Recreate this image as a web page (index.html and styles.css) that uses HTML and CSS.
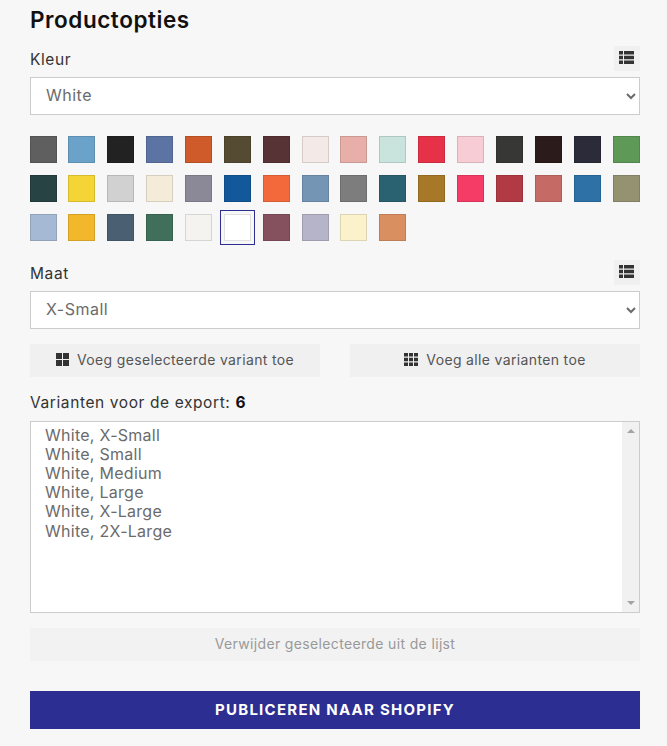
FILE: index.html
```html
<!DOCTYPE html>
<html lang="nl">
<head>
  <meta charset="UTF-8" />
  <meta name="viewport" content="width=device-width, initial-scale=1.0"/>
  <title>Productopties</title>
  <link rel="stylesheet" href="styles.css">
</head>
<body>
  <main class="options">
    <h2 class="options-title">Productopties</h2>

    <div class="field-head field-head-color">
      <label class="field-label">Kleur</label>
      <button class="icon-btn" type="button" aria-label="Lijst">
        <svg width="15" height="13" viewBox="0 0 15 13"><path d="M0 0h4v3.6H0zM5 0h10v3.6H5zM0 4.7h4v3.6H0zM5 4.7h10v3.6H5zM0 9.4h4V13H0zM5 9.4h10V13H5z"/></svg>
      </button>
    </div>
    <select class="field-select">
      <option>White</option>
    </select>

    <div class="swatches">
      <button class="swatch" style="background-color:#5f5f5f"></button>
      <button class="swatch" style="background-color:#6ba2c9"></button>
      <button class="swatch" style="background-color:#222222"></button>
      <button class="swatch" style="background-color:#5c74a3"></button>
      <button class="swatch" style="background-color:#cf5b2a"></button>
      <button class="swatch" style="background-color:#554b33"></button>
      <button class="swatch" style="background-color:#573336"></button>
      <button class="swatch" style="background-color:#f3e9e6"></button>
      <button class="swatch" style="background-color:#e8afa9"></button>
      <button class="swatch" style="background-color:#c9e4dc"></button>
      <button class="swatch" style="background-color:#e63148"></button>
      <button class="swatch" style="background-color:#f7ccd5"></button>
      <button class="swatch" style="background-color:#373735"></button>
      <button class="swatch" style="background-color:#2b1c1b"></button>
      <button class="swatch" style="background-color:#2c2b3a"></button>
      <button class="swatch" style="background-color:#5f9957"></button>

      <button class="swatch" style="background-color:#284343"></button>
      <button class="swatch" style="background-color:#f5d535"></button>
      <button class="swatch" style="background-color:#d1d1d1"></button>
      <button class="swatch" style="background-color:#f4ecd8"></button>
      <button class="swatch" style="background-color:#8b8997"></button>
      <button class="swatch" style="background-color:#12589a"></button>
      <button class="swatch" style="background-color:#f4693c"></button>
      <button class="swatch" style="background-color:#7595b4"></button>
      <button class="swatch" style="background-color:#7d7d7d"></button>
      <button class="swatch" style="background-color:#2a6272"></button>
      <button class="swatch" style="background-color:#a67828"></button>
      <button class="swatch" style="background-color:#f43c66"></button>
      <button class="swatch" style="background-color:#b23a44"></button>
      <button class="swatch" style="background-color:#c66a65"></button>
      <button class="swatch" style="background-color:#2d71a7"></button>
      <button class="swatch" style="background-color:#959272"></button>

      <button class="swatch" style="background-color:#a6b9d4"></button>
      <button class="swatch" style="background-color:#f3b72c"></button>
      <button class="swatch" style="background-color:#4a6072"></button>
      <button class="swatch" style="background-color:#40705c"></button>
      <button class="swatch" style="background-color:#f5f3ef"></button>
      <button class="swatch swatch-active" style="background-color:#ffffff"></button>
      <button class="swatch" style="background-color:#86515f"></button>
      <button class="swatch" style="background-color:#b6b4c9"></button>
      <button class="swatch" style="background-color:#fbf2cb"></button>
      <button class="swatch" style="background-color:#d98f60"></button>
    </div>

    <div class="field-head field-head-size">
      <label class="field-label">Maat</label>
      <button class="icon-btn" type="button" aria-label="Lijst">
        <svg width="15" height="13" viewBox="0 0 15 13"><path d="M0 0h4v3.6H0zM5 0h10v3.6H5zM0 4.7h4v3.6H0zM5 4.7h10v3.6H5zM0 9.4h4V13H0zM5 9.4h10V13H5z"/></svg>
      </button>
    </div>
    <select class="field-select">
      <option>X-Small</option>
    </select>

    <div class="add-row">
      <button class="btn" type="button">
        <svg width="13" height="13" viewBox="0 0 13 13"><path d="M0 0h6v6H0zM7 0h6v6H7zM0 7h6v6H0zM7 7h6v6H7z"/></svg>
        Voeg geselecteerde variant toe
      </button>
      <button class="btn" type="button">
        <svg width="14" height="13" viewBox="0 0 14 13"><path d="M0 0h4v3.6H0zM5 0h4v3.6H5zM10 0h4v3.6h-4zM0 4.7h4v3.6H0zM5 4.7h4v3.6H5zM10 4.7h4v3.6h-4zM0 9.4h4V13H0zM5 9.4h4V13H5zM10 9.4h4V13h-4z"/></svg>
        Voeg alle varianten toe
      </button>
    </div>

    <p class="export-count">Varianten voor de export: <strong>6</strong></p>

    <div class="variant-box">
      <ul class="variant-list">
        <li>White, X-Small</li>
        <li>White, Small</li>
        <li>White, Medium</li>
        <li>White, Large</li>
        <li>White, X-Large</li>
        <li>White, 2X-Large</li>
      </ul>
      <div class="fake-scroll">
        <span class="arrow-up"></span>
        <span class="arrow-down"></span>
      </div>
    </div>

    <button class="btn btn-remove" type="button" disabled>Verwijder geselecteerde uit de lijst</button>

    <button class="btn-publish" type="button">PUBLICEREN NAAR SHOPIFY</button>
  </main>
</body>
</html>
```

FILE: styles.css
```css
* {
  margin: 0; padding: 0; box-sizing: border-box;
  font-family: 'Inter', 'Open Sans', sans-serif;
}
body {
  background: #f7f7f7;
  color: #333;
}
.options {
  width: 610px;
  margin-left: 30px;
}
.options-title {
  font-size: 22.5px;
  line-height: 26px;
  font-weight: 600;
  letter-spacing: 0.55px;
  color: #111;
  padding-top: 7px;
}
.field-head {
  display: flex;
  justify-content: space-between;
  align-items: center;
  height: 25px;
  margin-bottom: 6px;
}
.field-head-color {
  margin-top: 13px;
}
.field-head-size {
  margin-top: 19px;
}
.field-label {
  font-size: 15.5px;
  letter-spacing: 0.6px;
  padding-top: 2px;
  color: #333;
}
.icon-btn {
  width: 26px;
  height: 25px;
  padding: 0 1px 2px 0;
  border: none;
  background: #f0f0f0;
  display: flex;
  align-items: center;
  justify-content: center;
}
.icon-btn svg, .btn svg {
  fill: #333;
}
.field-select {
  display: block;
  width: 100%;
  height: 38px;
  padding: 0 0 2px 11px;
  font-size: 16px;
  letter-spacing: 0.5px;
  color: #6b6b6b;
  background-color: #fff;
  border: 1px solid #ccc;
  border-radius: 0;
}
.swatches {
  display: grid;
  grid-template-columns: repeat(16, 27px);
  justify-content: space-between;
  row-gap: 12px;
  margin: 21px 0.3px 0 -0.4px;
}
.swatch {
  width: 27px;
  height: 27px;
  border: 1px solid rgba(0, 0, 0, 0.12);
}
.swatch-active {
  outline: 1px solid #2d2e91;
  outline-offset: 3px;
}
.add-row {
  display: flex;
  justify-content: space-between;
  margin-top: 15px;
}
.add-row .btn {
  width: 290px;
}
.btn {
  display: flex;
  align-items: center;
  justify-content: center;
  gap: 8px;
  height: 33px;
  padding-bottom: 2px;
  border: none;
  background: #f0f0f0;
  font-size: 14px;
  letter-spacing: 0.35px;
  color: #555;
}
.export-count {
  font-size: 15.5px;
  line-height: 20px;
  letter-spacing: 0.6px;
  margin-top: 16px;
  color: #333;
}
.export-count strong {
  color: #111;
}
.variant-box {
  display: flex;
  height: 192px;
  margin-top: 8px;
  background: #fff;
  border: 1px solid #ccc;
}
.variant-list {
  flex: 1;
  list-style: none;
  padding: 3.6px 14px;
  font-size: 16px;
  line-height: 19.2px;
  letter-spacing: 0.27px;
  color: #6b6b6b;
}
.fake-scroll {
  width: 17px;
  background: #f1f1f1;
  display: flex;
  flex-direction: column;
  justify-content: space-between;
  align-items: center;
  padding: 7px 0;
}
.arrow-up {
  border-left: 4px solid transparent;
  border-right: 4px solid transparent;
  border-bottom: 4px solid #a3a3a3;
}
.arrow-down {
  border-left: 4px solid transparent;
  border-right: 4px solid transparent;
  border-top: 4px solid #a3a3a3;
}
.btn-remove {
  width: 100%;
  margin-top: 15px;
  background: #f2f2f2;
  color: #999;
}
.btn-publish {
  display: block;
  width: 100%;
  height: 38px;
  margin-top: 30px;
  padding-bottom: 2px;
  border: none;
  background: #2d2e91;
  color: #fff;
  font-size: 15px;
  letter-spacing: 1.25px;
  font-weight: 700;
}
```
